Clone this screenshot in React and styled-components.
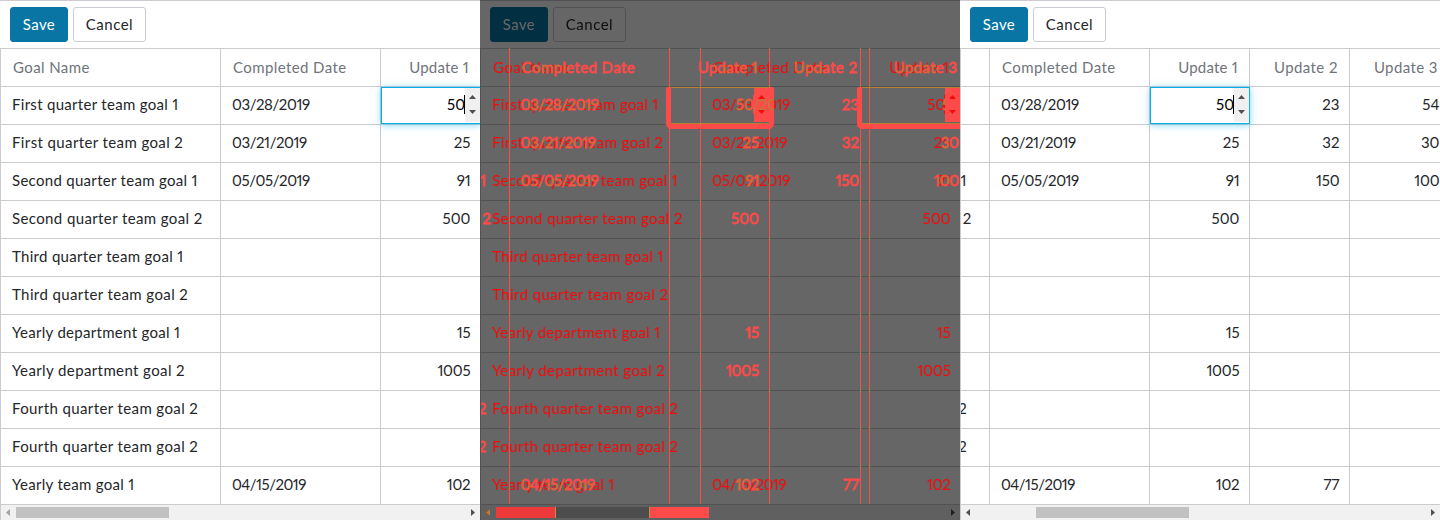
import React from "react";
import styled, { createGlobalStyle, css } from "styled-components";

const GlobalStyle = createGlobalStyle`
  body { margin: 0; background: #fff; }
  * { box-sizing: border-box; }
`;

const LINE = "#cbcbd0";

/* Channel codes of the comparison layers; the tint filter turns them into the final colours. */
const AFTER = "rgb(255,255,0)";
const BEFORE = "rgb(0,255,255)";
const BOTH = "rgb(0,255,0)";

const Page = styled.main`
  display: flex;
  width: 1440px;
  height: 520px;
  overflow: hidden;
  font-family: Lato, "Liberation Sans", sans-serif;
  font-size: 15px;
  font-feature-settings: "pnum" 1;
  color: #24262a;
`;

const Panel = styled.section`
  display: flex;
  flex-direction: column;
  width: 480px;
  height: 520px;
  overflow: hidden;
  background: #fff;
  ${(p) => p.$dim && css`filter: brightness(0.4);`}
`;

const Toolbar = styled.div`
  display: flex;
  flex: none;
  gap: 5px;
  height: 48px;
  padding: 6px 10px 0;
  border-top: 1px solid ${LINE};
`;

const Button = styled.button`
  height: 35px;
  width: ${(p) => (p.$primary ? "58px" : "73px")};
  padding: 0 0 1px;
  border: 1px solid ${(p) => (p.$primary ? "#0875a4" : LINE)};
  border-radius: 3px;
  background: ${(p) => (p.$primary ? "#0875a4" : "#fff")};
  color: ${(p) => (p.$primary ? "#fff" : "#24262a")};
  font: inherit;
  letter-spacing: ${(p) => (p.$primary ? "0.4px" : "0.5px")};
`;

const Viewport = styled.div`
  flex: none;
  height: 457px;
  overflow: hidden;
  border-left: 1px solid ${(p) => (p.$code ? "transparent" : LINE)};
`;

const Row = styled.div`
  display: grid;
  grid-template-columns: 219px 160px 100px 100px 100px;
  width: 679px;
  height: 38px;
  margin-left: ${(p) => -p.$scroll}px;
`;

const Cell = styled.div`
  padding: ${(p) => (p.$head ? "0 11.2px 0 12px" : "0 9.6px 0 11px")};
  border-top: 1px solid ${(p) => (p.$code ? "transparent" : LINE)};
  color: ${(p) => p.$code || (p.$head ? "#70747b" : "#24262a")};
  line-height: ${(p) => (p.$head ? 36 : 34)}px;
  letter-spacing: ${(p) => p.$spacing}px;
  text-align: ${(p) => (p.$right ? "right" : "left")};
  white-space: nowrap;
  ${(p) => p.$bold && css`-webkit-text-stroke: 0.8px ${p.$code};`}
  &:not(:first-child) {
    padding-left: ${(p) => (p.$head ? 12 : 11)}px;
    border-left: 1px solid ${(p) => (p.$code ? "transparent" : LINE)};
    ${(p) =>
      p.$code &&
      css`
        border-top: 0;
        padding-top: 1px;
        border-left: 0;
        padding-left: ${p.$head ? 13 : 12}px;
        background: linear-gradient(${BOTH} 2px, ${AFTER} 2px 37px, ${BOTH} 37px) left / 1px 100% no-repeat;
      `}
  }
  &&[data-editing] { padding: ${(p) => (p.$code ? "1px 0 0 1px" : 0)}; }
`;

const Editor = styled.div`
  display: flex;
  justify-content: flex-end;
  width: 100px;
  height: 37px;
  border: 1px solid #08aee8;
  background: #fff;
  color: #000;
  line-height: 32px;
  position: relative;
  z-index: 1;
  box-shadow: 0 1px 7px rgba(0, 174, 239, 0.5);
  ${(p) =>
    p.$code &&
    css`
      border-color: ${BOTH} ${AFTER} ${BOTH} ${AFTER};
      background: transparent;
      color: ${p.$code};
      box-shadow: 0 1px 0 4px ${AFTER};
      border-radius: 2px;
      clip-path: inset(0 -5px -5px -5px round 3px);
    `}
`;

const Caret = styled.span`
  width: 1px;
  height: 19px;
  margin-top: 7px;
  margin-left: -1px;
  background: ${(p) => p.$code || "#000"};
`;

const Spinner = styled.span`
  display: flex;
  flex-direction: column;
  align-items: center;
  justify-content: space-between;
  width: 15px;
  height: 34px;
  padding: 7px 0 8px;
  background: ${(p) => (p.$code ? AFTER : "#f0f0f0")};
`;

const Triangle = styled.svg`
  display: block;
  flex: none;
  fill: ${(p) => p.$fill || "#505050"};
`;

const Scroller = styled.div`
  display: flex;
  align-items: center;
  width: 480px;
  height: 15px;
  padding: 0 5px 0 5px;
  border-left: 1px solid ${LINE};
  background: #f1f1f1;
`;

const Track = styled.div`
  flex: 1;
  height: 11px;
  margin: 0 5px 0 6px;
  padding-left: ${(p) => p.$offset}px;
`;

const Thumb = styled.div`
  width: ${(p) => p.$width || 153}px;
  height: 11px;
  background: #c1c1c1;
`;

const Compare = styled.div`
  display: grid;
  width: 480px;
  height: 520px;
  overflow: hidden;
  & > * { grid-area: 1 / 1; }
`;

const Changes = styled.div`
  display: grid;
  z-index: 1;
  isolation: isolate;
  width: 480px;
  height: 520px;
  overflow: hidden;
  filter: url(#tint);
`;

const Layer = styled.div`
  grid-area: 1 / 1;
  isolation: isolate;
  width: 480px;
  padding-top: 48px;
  mix-blend-mode: multiply;
`;

const ScrollChanges = styled.div`
  z-index: 2;
  display: flex;
  align-self: end;
  gap: 93px;
  height: 13px;
  padding-left: 16px;
`;

const ChangedThumb = styled.span`
  width: 60px;
  height: 11px;
  background: ${(p) => p.$color};
  border-${(p) => p.$edge}: 1px solid #c98a45;
`;

const ChangedArrow = styled.span`
  z-index: 3;
  align-self: end;
  height: 15px;
  padding: 4px 0 0 6px;
`;

const HiddenSvg = styled.svg`
  position: absolute;
  width: 0;
  height: 0;
`;

const headers = ["Goal Name", "Completed Date", "Update 1", "Update 2", "Update 3"];
const rows = [
  ["First quarter team goal 1", "03/28/2019", "50", "23", "54"],
  ["First quarter team goal 2", "03/21/2019", "25", "32", "30"],
  ["Second quarter team goal 1", "05/05/2019", "91", "150", "100"],
  ["Second quarter team goal 2", "", "500", "", ""],
  ["Third quarter team goal 1", "", "", "", ""],
  ["Third quarter team goal 2", "", "", "", ""],
  ["Yearly department goal 1", "", "15", "", ""],
  ["Yearly department goal 2", "", "1005", "", ""],
  ["Fourth quarter team goal 2", "", "", "", ""],
  ["Fourth quarter team goal 2", "", "", "", ""],
  ["Yearly team goal 1", "04/15/2019", "102", "77", ""],
];
const headSpacing = [0.4, 0.4, 0.2, 0.4, 0.4];

function bodySpacing(text, column) {
  if (column === 0) return text.endsWith("1") ? 0.3 : 0.39;
  if (column === 1) return text.startsWith("04") ? -0.5 : -0.42;
  return text.includes("1") ? -0.2 : 0;
}

function Arrow({ dir, fill }) {
  const shapes = {
    up: [7, 4, "0,4 3.5,0 7,4"],
    down: [7, 4, "0,0 7,0 3.5,4"],
    left: [4, 7, "4,0 4,7 0,3.5"],
    right: [4, 7, "0,0 4,3.5 0,7"],
  };
  const [w, h, points] = shapes[dir];
  return (
    <Triangle width={w} height={h} viewBox={`0 0 ${w} ${h}`} $fill={fill}>
      <polygon points={points} />
    </Triangle>
  );
}

function NumberEditor({ value, code }) {
  const arrow = code ? BEFORE : undefined;
  return (
    <Editor $code={code}>
      <span>{value}</span>
      <Caret $code={code} />
      <Spinner $code={code}>
        <Arrow dir="up" fill={arrow} />
        <Arrow dir="down" fill={arrow} />
      </Spinner>
    </Editor>
  );
}

const BottomLine = styled.div`
  height: 1px;
  background: ${LINE};
`;

const RuledArea = styled.div`
  height: 457px;
  border-left: 1px solid ${LINE};
`;

const Rule = styled.div`
  height: 38px;
  border-top: 1px solid ${LINE};
`;

function Table({ scroll = 0, code, bold }) {
  return (
    <Viewport $code={code}>
      {[headers, ...rows].map((row, r) => (
        <Row key={r} $scroll={scroll}>
          {row.map((text, c) => {
            const editing = r === 1 && c === 2;
            return (
              <Cell
                key={c}
                $head={r === 0}
                $right={c > 1}
                $code={code}
                $bold={bold}
                $spacing={r === 0 ? headSpacing[c] : bodySpacing(text, c)}
                data-editing={editing || undefined}
              >
                {editing ? <NumberEditor value={text} code={code} /> : text}
              </Cell>
            );
          })}
        </Row>
      ))}
      {!code && <BottomLine />}
    </Viewport>
  );
}

function Actions() {
  return (
    <Toolbar>
      <Button $primary>Save</Button>
      <Button>Cancel</Button>
    </Toolbar>
  );
}

function ScrollBar({ scrolled, width, offset }) {
  return (
    <Scroller>
      <Arrow dir="left" fill={scrolled ? "#505050" : "#a3a3a3"} />
      <Track $offset={offset}>
        <Thumb $width={width} />
      </Track>
      <Arrow dir="right" />
    </Scroller>
  );
}

function Snapshot({ scroll, offset }) {
  return (
    <Panel>
      <Actions />
      <Table scroll={scroll} />
      <ScrollBar scrolled={scroll > 0} offset={offset} />
    </Panel>
  );
}

function Difference() {
  return (
    <Compare>
      <Panel $dim>
        <Actions />
        <RuledArea>
          {[headers, ...rows].map((_, i) => <Rule key={i} />)}
          <BottomLine />
        </RuledArea>
        <ScrollBar scrolled offset={60} width={93} />
      </Panel>
      <Changes>
        <Layer><Table scroll={191} code={AFTER} bold /></Layer>
        <Layer><Table code={BEFORE} /></Layer>
      </Changes>
      <ScrollChanges>
        <ChangedThumb $color="#ed3939" $edge="right" />
        <ChangedThumb $color="#ff4a4a" $edge="left" />
      </ScrollChanges>
      <ChangedArrow><Arrow dir="left" fill="#c27a34" /></ChangedArrow>
    </Compare>
  );
}

export default function App() {
  return (
    <>
      <GlobalStyle />
      <HiddenSvg aria-hidden="true">
        <filter id="tint" x="0" y="0" width="100%" height="100%" colorInterpolationFilters="sRGB">
          <feColorMatrix
            values="0.28 0.72 0.24 0 0
                    -0.21 0.5 -0.46 0 0
                    0.09 0.2 -0.16 0 0
                    0 0 0 1 0"
          />
        </filter>
      </HiddenSvg>
      <Page>
        <Snapshot scroll={0} offset={0} />
        <Difference />
        <Snapshot scroll={191} offset={60} />
      </Page>
    </>
  );
}
